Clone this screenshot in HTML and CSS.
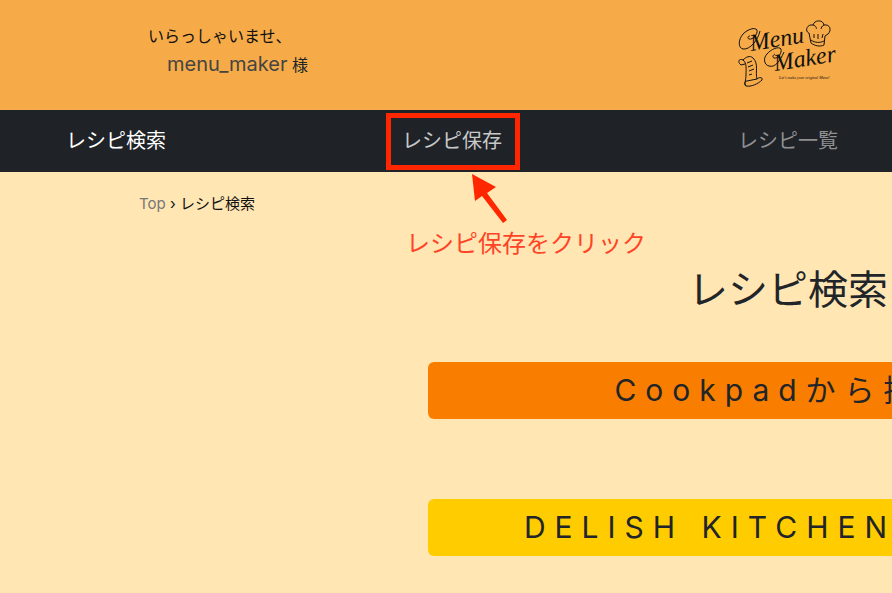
FILE: index.html
```html
<!DOCTYPE html>
<html lang="ja">
<head>
<meta charset="utf-8">
<title>Menu Maker</title>
<link rel="stylesheet" href="styles.css">
</head>
<body>
<header class="header">
  <div class="greeting">
    <p class="welcome">いらっしゃいませ、</p>
    <p class="user"><a class="user-name" href="#">menu_maker</a> 様</p>
  </div>
  <a class="logo" href="#" aria-label="Menu Maker">
    <svg viewBox="0 -1 100 70" width="100" height="70">
      <g class="ink">
        <path d="M22 10C20 19 12 29 5 28C0 27 0 19 5 13C10 8 17 6 19 9C20 13 15 19 11 18C9 17 10 15 12 15"/>
        <path d="M46 31C42 40 37 47 31 45C26 44 25 37 29 33C33 28 41 25 43 28C44 32 40 38 36 37C34 36 35 34 37 33"/>
        <path d="M73 22L71 12C67 11 68 3 75 4C76 -1 85 -2 86 4C92 3 94 9 90 13L87 15L86 24C82 26 77 25 73 22ZM73 19C77 22 82 22 86 20M76 17V13M80 18V13M84 17L85 13M75 4C78 5 79 7 78 8M86 4C84 5 83 7 83 8"/>
        <path d="M3 44C-1 41 1 37 5 39C9 42 8 48 8 54C8 59 6 62 8 65C13 66 20 63 24 59C25 56 21 56 19 58C17 51 21 43 15 37C12 34 8 36 5 39M3 44L7 43M8 65C6 64 6 60 9 60L19 58M9 42L14 40M10 46L15 44M11 50L16 48M11 54L14 53"/>
      </g>
      <text class="script" transform="translate(13 30) rotate(-9)">Menu</text>
      <text class="script" transform="translate(37 50) rotate(-9)">Maker</text>
      <text class="tagline" x="41" y="58">Let’s make your original Menu!</text>
    </svg>
  </a>
</header>
<nav class="nav">
  <a class="nav-link active" href="#">レシピ検索</a>
  <a class="nav-link hover" href="#">レシピ保存
    <span class="callout">
      <svg class="arrow" viewBox="0 0 40 52" width="40" height="52"><path d="M2 1L26 14L17 20L37 47L33 50L12 23L5 28Z"/></svg>
      <span class="note">レシピ保存をクリック</span>
    </span>
  </a>
  <a class="nav-link" href="#">レシピ一覧</a>
</nav>
<main>
  <div class="breadcrumb"><a href="#">Top</a> › レシピ検索</div>
  <section class="search">
    <h1>レシピ検索</h1>
    <button class="site cookpad" type="button">Cookpadから探す</button>
    <button class="site delish" type="button">DELISH KITCHENから探す</button>
  </section>
</main>
</body>
</html>
```
FILE: styles.css
```css
* { box-sizing: border-box; }

html { overflow: hidden; }

body {
  margin: 0;
  overflow: hidden;
  min-height: 100vh;
  background: #ffe6b3;
  color: #212529;
  font-family: Inter, "Noto Sans CJK JP", sans-serif;
  font-size: 16px;
}

a { color: inherit; text-decoration: none; }
p, h1 { margin: 0; }

.header {
  display: flex;
  justify-content: space-between;
  height: 110px;
  padding: 20px 54px 0 148px;
  background: #f6ab48;
}

.welcome { line-height: 32px; color: #111; }
.user { padding-left: 19px; line-height: 24px; }
.user-name { font-size: 20px; color: #444; }

.logo { color: #111; }
.logo svg { display: block; overflow: visible; }
.ink { fill: none; stroke: currentColor; stroke-width: 1; }
.script { font: italic 24px "Liberation Serif", serif; fill: currentColor; }
.tagline { font: italic 4px "Liberation Serif", serif; fill: currentColor; }

.nav {
  display: grid;
  grid-template-columns: repeat(3, 336px);
  align-items: center;
  height: 62px;
  padding-left: 66px;
  background: #1f2226;
}

.nav-link {
  position: relative;
  justify-self: start;
  font-size: 20px;
  line-height: 30px;
  color: #8f9092;
}
.nav-link.active { color: #fff; }
.nav-link.hover { color: #c7c8c9; }

.callout {
  position: absolute;
  top: -13px;
  left: -16px;
  width: 134px;
  height: 57px;
  border: 5px solid #ff2600;
}
.arrow { position: absolute; top: 55px; left: 79px; fill: #ff2600; }
.note {
  position: absolute;
  top: 108px;
  left: 15px;
  font-size: 24px;
  line-height: 36px;
  white-space: nowrap;
  color: #ff4326;
}

.breadcrumb {
  padding: 20px 0 0 139px;
  font-size: 15px;
  line-height: 24px;
  color: #111;
}
.breadcrumb a { color: #777; }

.search {
  width: 720px;
  margin: 44px 0 0 428px;
  text-align: center;
}
h1 {
  margin-bottom: 42px;
  font-size: 40px;
  font-weight: 400;
  line-height: 60px;
}

.site {
  display: block;
  width: 100%;
  height: 57px;
  padding: 0;
  border: 0;
  border-radius: 6px;
  color: #212529;
  font-family: inherit;
  font-size: 30px;
  line-height: 57px;
  letter-spacing: 9px;
}
.site + .site { margin-top: 80px; }
.cookpad { background: #f97e00; }
.delish { background: #ffcc00; }
```
